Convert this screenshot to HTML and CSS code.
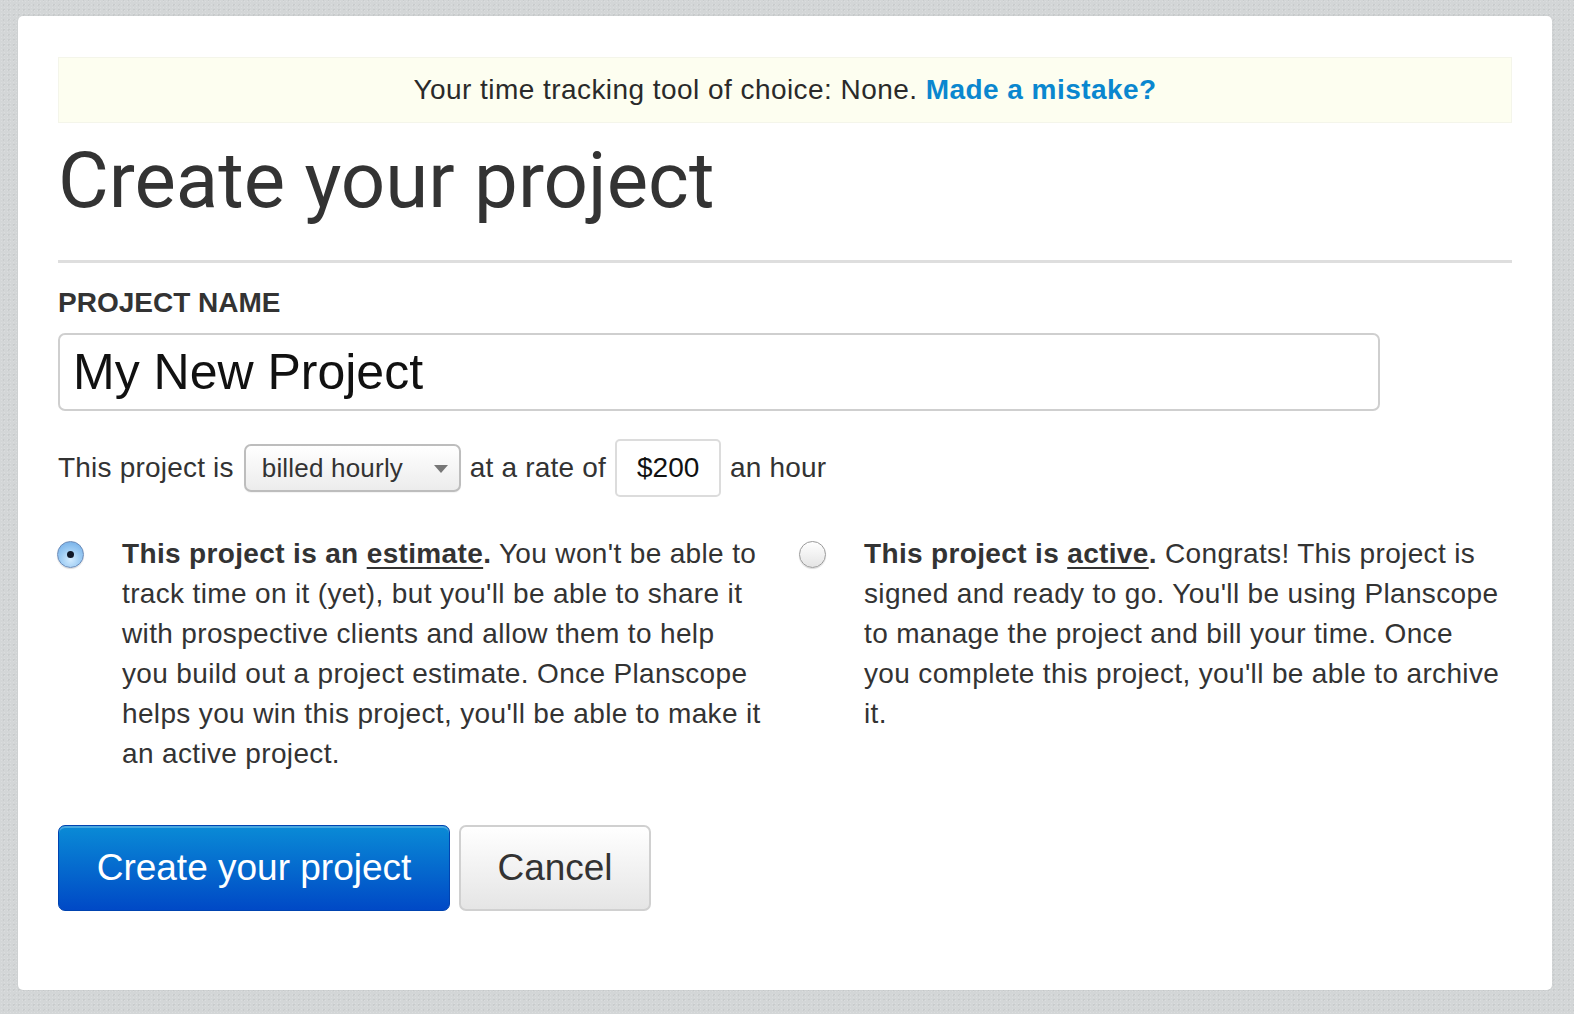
FILE: index.html
```html
<!DOCTYPE html>
<html lang="en">
<head>
<meta charset="utf-8">
<title>Create your project</title>
<link rel="stylesheet" href="styles.css">
</head>
<body>
<div class="card">
  <div class="notice">Your time tracking tool of choice: None. <a href="#" class="notice-link">Made a mistake?</a></div>
  <h1 class="title">Create your project</h1>
  <hr class="rule">
  <label class="field-label" for="pname">PROJECT NAME</label>
  <input class="name-input" id="pname" type="text" value="My New Project">
  <div class="rate-row">
    <span>This project is</span>
    <span class="select-wrap">
      <select class="billing-select">
        <option>billed hourly</option>
        <option>fixed price</option>
      </select>
    </span>
    <span>at a rate of</span>
    <input class="rate-input" type="text" value="$200">
    <span>an hour</span>
  </div>
  <div class="status-grid">
    <label class="status">
      <span class="radio-cell"><input class="radio" type="radio" name="status" checked></span>
      <span class="status-text status-text-left"><b>This project is an <u>estimate</u>.</b> You won't be able to track time on it (yet), but you'll be able to share it with prospective clients and allow them to help you build out a project estimate. Once Planscope helps you win this project, you'll be able to make it an active project.</span>
    </label>
    <label class="status">
      <span class="radio-cell"><input class="radio" type="radio" name="status"></span>
      <span class="status-text status-text-right"><b>This project is <u>active</u>.</b> Congrats! This project is signed and ready to go. You'll be using Planscope to manage the project and bill your time. Once you complete this project, you'll be able to archive it.</span>
    </label>
  </div>
  <div class="actions">
    <button class="btn btn-primary" type="button">Create your project</button>
    <button class="btn btn-cancel" type="button">Cancel</button>
  </div>
</div>
</body>
</html>
```
FILE: styles.css
```css
* { box-sizing: border-box; }

html {
  overflow: hidden;
}

body {
  margin: 0;
  background-color: #d3d6d7;
  background-image:
    radial-gradient(rgba(255,255,255,0.18) 1px, transparent 1px),
    radial-gradient(rgba(0,0,0,0.05) 1px, transparent 1px);
  background-size: 3px 3px, 5px 5px;
  background-position: 0 0, 1px 2px;
  padding: 16px 22px 20px 18px;
  font-family: "Liberation Sans", Arial, Helvetica, sans-serif;
  color: #333;
}

.card {
  background: #fff;
  border-radius: 5px;
  padding: 41px 40px 79px 40px;
  box-shadow: 0 0 2px rgba(0,0,0,0.08);
}

.notice {
  background: #fdfef0;
  border: 1px solid #f4f5ea;
  height: 66px;
  line-height: 64px;
  text-align: center;
  font-size: 28px;
  letter-spacing: 0.45px;
  color: #2a2a2a;
}

.notice-link {
  color: #0a87cf;
  font-weight: bold;
  text-decoration: none;
}

.title {
  font-family: Roboto, "Liberation Sans", sans-serif;
  font-weight: 400;
  font-size: 78px;
  line-height: 90px;
  color: #333;
  margin: 13px 0 0 0;
}

.rule {
  border: 0;
  height: 3px;
  background: #dedede;
  margin: 34px 0 0 0;
}

.field-label {
  display: block;
  font-weight: bold;
  font-size: 28px;
  line-height: 32px;
  color: #333;
  margin-top: 24px;
}

.name-input {
  display: block;
  margin-top: 14px;
  width: 1322px;
  height: 78px;
  border: 2px solid #cfcfcf;
  border-radius: 7px;
  padding: 0 13px;
  font-family: "Liberation Sans", Arial, sans-serif;
  font-size: 50px;
  color: #111;
  outline: none;
}

.rate-row {
  display: flex;
  align-items: center;
  gap: 9px;
  margin-top: 28px;
  font-size: 28px;
  letter-spacing: 0.2px;
  color: #333;
  height: 58px;
}

.select-wrap {
  position: relative;
  display: inline-block;
  margin-left: 1px;
}

.select-wrap::after {
  content: "";
  position: absolute;
  right: 13px;
  top: 21px;
  border-left: 7px solid transparent;
  border-right: 7px solid transparent;
  border-top: 8px solid #777;
  pointer-events: none;
}

.billing-select {
  appearance: none;
  -webkit-appearance: none;
  display: block;
  width: 217px;
  height: 48px;
  border: 2px solid #bdbdbd;
  border-radius: 7px;
  background: linear-gradient(#ffffff, #ececec);
  font-family: "Liberation Sans", Arial, sans-serif;
  font-size: 26px;
  letter-spacing: 0.2px;
  color: #333;
  padding: 0 0 0 16px;
  box-shadow: 0 1px 1px rgba(0,0,0,0.05);
}

.rate-input {
  width: 106px;
  height: 58px;
  border: 2px solid #dcdcdc;
  border-radius: 5px;
  padding: 0 0 0 20px;
  font-family: "Liberation Sans", Arial, sans-serif;
  font-size: 28px;
  color: #111;
  outline: none;
}

.status-grid {
  display: grid;
  grid-template-columns: 742px 1fr;
  margin-top: 37px;
}

.status {
  display: flex;
  align-items: flex-start;
}

.radio-cell {
  flex: 0 0 64px;
  padding-top: 7px;
}

.radio {
  appearance: none;
  -webkit-appearance: none;
  margin: 0 0 0 -1px;
  width: 27px;
  height: 27px;
  border-radius: 50%;
  border: 1px solid #9a9a9a;
  background: linear-gradient(#ffffff, #e4e4e4);
  box-shadow: 0 1px 1px rgba(0,0,0,0.15);
  position: relative;
  display: block;
}

.radio:checked {
  border-color: #6b8bb8;
  background: radial-gradient(circle at 50% 70%, #d3ecff 0%, #9fcdf4 45%, #6aa8e4 100%);
}

.radio:checked::after {
  content: "";
  position: absolute;
  left: 9px;
  top: 9px;
  width: 7px;
  height: 7px;
  border-radius: 50%;
  background: #101828;
}

.status-text {
  font-size: 28px;
  line-height: 40px;
  letter-spacing: 0.35px;
  color: #333;
}

.status-text-left {
  width: 644px;
}

.status-text-right {
  width: 638px;
}

.status-text u {
  text-decoration-thickness: 2px;
  text-underline-offset: 4px;
}

.actions {
  display: flex;
  gap: 9px;
  margin-top: 51px;
}

.btn {
  height: 86px;
  border-radius: 7px;
  font-family: "Liberation Sans", Arial, sans-serif;
  font-size: 37px;
  cursor: pointer;
}

.btn-primary {
  width: 392px;
  color: #fff;
  border: 1px solid #0043b0;
  background: linear-gradient(#0a8bd6, #0049c6);
  box-shadow: inset 0 2px 0 rgba(255,255,255,0.25);
}

.btn-cancel {
  width: 192px;
  color: #333;
  border: 2px solid #d0d0d0;
  background: linear-gradient(#ffffff, #e5e5e5);
}
```
